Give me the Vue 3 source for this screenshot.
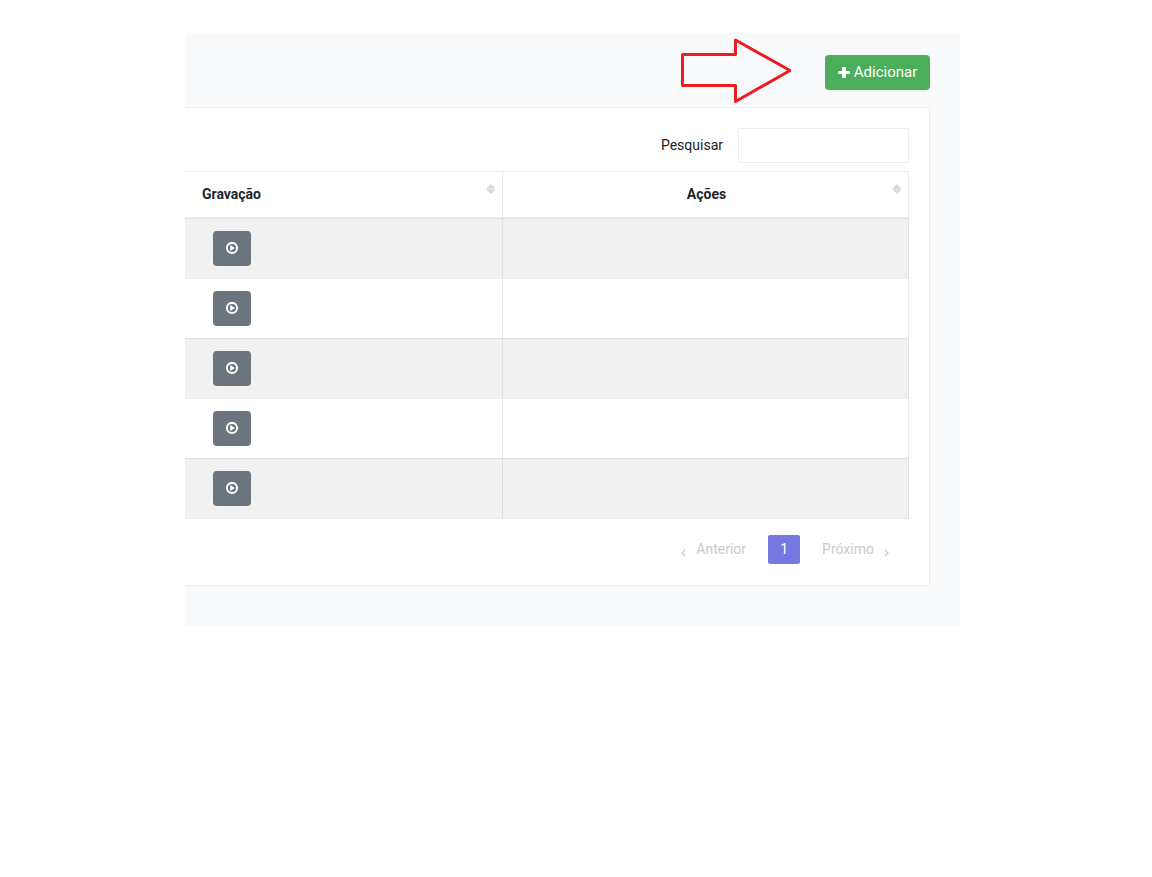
<script setup>
import { ref } from "vue";

const search = ref("");
const rows = ref([1, 2, 3, 4, 5]);
const columns = ["Gravação", "Ações"];
</script>

<template>
  <main class="page">
    <section class="panel">
      <header class="panel-header">
        <svg class="arrow" width="110" height="69" viewBox="0 0 110 69" aria-hidden="true">
          <path
            d="M1.5 16.5H54.5V2L109 32.5L54.5 63.5V47.5H1.5Z"
            fill="none"
            stroke="#ed1c24"
            stroke-width="3"
            stroke-linejoin="round"
          />
        </svg>
        <button type="button" class="btn btn-add">
          <svg width="12" height="12" viewBox="0 0 12 12" aria-hidden="true">
            <path
              d="M5 0H7Q8 0 8 1V4H11Q12 4 12 5V6Q12 7 11 7H8V10Q8 11 7 11H5Q4 11 4 10V7H1Q0 7 0 6V5Q0 4 1 4H4V1Q4 0 5 0Z"
              fill="currentColor"
            />
          </svg>
          Adicionar
        </button>
      </header>

      <div class="card">
        <div class="search">
          <label for="search">Pesquisar</label>
          <input id="search" v-model="search" type="text" />
        </div>

        <table>
          <thead>
            <tr>
              <th v-for="column in columns" :key="column">
                <div class="th-content">
                  <span class="th-label">{{ column }}</span>
                  <svg width="8" height="10" viewBox="0 0 8 10" aria-hidden="true">
                    <path d="M4 0L8 4V4.7H0V4Z" fill="#d8d8d8" />
                    <path d="M4 10L8 6V5.3H0V6Z" fill="#d8d8d8" />
                  </svg>
                </div>
              </th>
            </tr>
          </thead>
          <tbody>
            <tr v-for="row in rows" :key="row">
              <td>
                <button type="button" class="btn btn-play" aria-label="Reproduzir">
                  <svg width="14" height="13" viewBox="0 0 14 13" aria-hidden="true">
                    <circle cx="7" cy="6" r="5.1" fill="none" stroke="#fff" stroke-width="2" />
                    <path d="M5.2 3L10 6L5.2 9Z" fill="#fff" />
                  </svg>
                </button>
              </td>
              <td></td>
            </tr>
          </tbody>
        </table>

        <nav class="pagination">
          <button type="button" class="page-link" disabled>
            <svg width="5" height="8" viewBox="0 0 5 8" aria-hidden="true">
              <path d="M4.3 0.7L1 4L4.3 7.3" fill="none" stroke="currentColor" stroke-width="1.3" />
            </svg>
            Anterior
          </button>
          <button type="button" class="page-number">1</button>
          <button type="button" class="page-link" disabled>
            Próximo
            <svg width="5" height="8" viewBox="0 0 5 8" aria-hidden="true">
              <path d="M0.7 0.7L4 4L0.7 7.3" fill="none" stroke="currentColor" stroke-width="1.3" />
            </svg>
          </button>
        </nav>
      </div>
    </section>
  </main>
</template>

<style>
body {
  background-color: #fff;
}
</style>

<style scoped>
.page {
  color: #212529;
  font-family: Roboto, "Liberation Sans", sans-serif;
  font-size: 14px;
  line-height: 21px;
  padding: 33px 192px 33px 185px;
}

.panel {
  background-color: #f9fafc;
  padding: 0 30px 40px 0;
}

.panel-header {
  align-items: center;
  display: flex;
  gap: 34px;
  justify-content: flex-end;
  padding-top: 5px;
}

button,
input {
  box-sizing: border-box;
  font: inherit;
}

.btn {
  align-items: center;
  border: 0;
  border-radius: 4px;
  color: #fff;
  cursor: pointer;
  display: flex;
  height: 35px;
  justify-content: center;
  padding: 0;
}

.btn-add {
  background-color: #4bae5b;
  font-size: 15px;
  gap: 4px;
  width: 105px;
}

.btn-play {
  background-color: #6c757d;
  width: 38px;
}

.card {
  background-color: #fff;
  border: 1px solid #eceef0;
  border-left: 0;
  border-radius: 0 3px 3px 0;
  padding: 20px 20px 21px 0;
}

.search {
  align-items: center;
  display: flex;
  gap: 15px;
  justify-content: flex-end;
  margin-bottom: 8px;
}

.search input {
  background-color: #fff;
  border: 1px solid #ebedf0;
  border-radius: 2px;
  height: 35px;
  padding: 0 10px;
  width: 171px;
}

table {
  border-collapse: separate;
  border-spacing: 0;
  table-layout: fixed;
  width: 100%;
}

th,
td {
  border-right: 1px solid rgba(0, 0, 0, 0.07);
  border-top: 1px solid rgba(0, 0, 0, 0.07);
  box-sizing: border-box;
}

th {
  border-bottom: 1px solid rgba(0, 0, 0, 0.07);
  font-weight: 700;
  height: 47px;
  padding: 0 7px 0 17px;
}

th:first-child {
  text-align: left;
  width: 318px;
}

th:last-child {
  text-align: center;
}

.th-content {
  align-items: flex-start;
  display: flex;
}

.th-label {
  flex: 1;
}

td {
  height: 60px;
  padding: 12px 28px;
}

tbody tr:nth-child(odd) {
  background-color: #f1f1f1;
}

tbody tr:last-child td {
  border-bottom: 1px solid rgba(0, 0, 0, 0.02);
  height: 61px;
}

.pagination {
  display: flex;
  gap: 22px;
  justify-content: flex-end;
  margin-top: 16px;
  padding-right: 20px;
}

.page-link {
  align-items: center;
  background: none;
  border: 0;
  color: #c9cacc;
  display: flex;
  gap: 10px;
  padding: 0;
}

.page-link svg {
  margin-top: 7px;
}

.page-number {
  background-color: #7478e0;
  border: 0;
  border-radius: 2px;
  color: #fff;
  cursor: pointer;
  height: 29px;
  padding: 0;
  width: 32px;
}
</style>
